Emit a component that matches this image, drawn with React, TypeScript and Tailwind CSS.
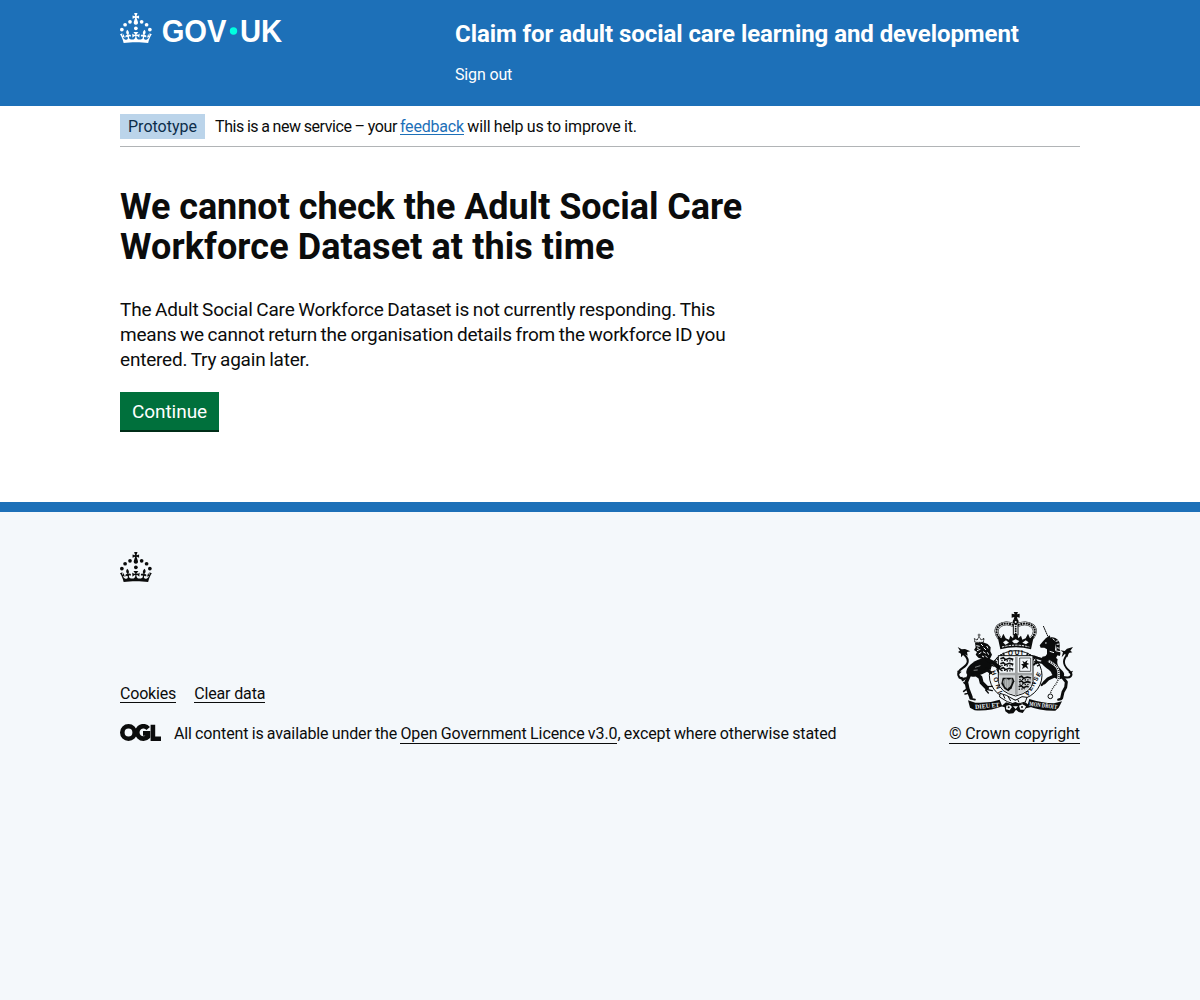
import type { ReactNode } from "react";

function Crown() {
  return (
    <svg viewBox="0 0 64 60" className="block h-[30px] w-8 shrink-0" fill="currentColor" aria-hidden="true">
      <circle cx="20" cy="17.6" r="3.7" />
      <circle cx="10.2" cy="23.5" r="3.7" />
      <circle cx="3.7" cy="33.2" r="3.7" />
      <circle cx="31.7" cy="30.6" r="3.7" />
      <circle cx="43.3" cy="17.6" r="3.7" />
      <circle cx="53.2" cy="23.5" r="3.7" />
      <circle cx="59.7" cy="33.2" r="3.7" />
      <path d="M33.1,9.8c.2-.1.3-.3.5-.5l4.6,2.4v-6.8l-4.6,1.5c-.1-.2-.3-.3-.5-.5l1.9-5.9h-6.7l1.9,5.9c-.2.1-.3.3-.5.5l-4.6-1.5v6.8l4.6-2.4c.1.2.3.3.5.5l-2.6,8c-.9,2.8,1.2,5.7,4.1,5.7h0c3,0,5.1-2.9,4.1-5.7l-2.6-8ZM37,37.9s-3.4,3.8-4.1,6.1c2.2,0,4.2-.5,6.4-2.8l-.7,8.5c-2-2.8-4.4-4.1-5.7-3.8.1,3.1.5,6.7,5.8,7.2,3.7.3,6.7-1.5,7-3.8.4-2.6-2-4.3-3.7-1.6-1.4-4.5,2.4-6.1,4.9-3.2-1.9-4.5-1.8-7.7,2.4-10.9,3,4,2.6,7.3-1.2,11.1,2.4-1.3,6.2,0,4,4.6-1.2-2.8-3.7-2.2-4.2.2-.3,1.7.7,3.7,3,4.2,1.9.3,4.7-.9,7-5.9-1.3,0-2.4.7-3.9,1.7l2.4-8c.6,2.3,1.4,3.7,2.2,4.5.6-1.6.5-2.8,0-5.3l5,1.8c-2.6,3.6-5.2,8.7-7.3,17.5-7.4-1.1-15.7-1.7-24.5-1.7h0c-8.8,0-17.1.6-24.5,1.7-2.1-8.9-4.7-13.9-7.3-17.5l5-1.8c-.5,2.5-.6,3.7,0,5.3.8-.8,1.6-2.3,2.2-4.5l2.4,8c-1.5-1-2.6-1.7-3.9-1.7,2.3,5,5.2,6.2,7,5.9,2.3-.4,3.3-2.4,3-4.2-.5-2.4-3-3.1-4.2-.2-2.2-4.6,1.6-6,4-4.6-3.7-3.7-4.2-7.1-1.2-11.1,4.2,3.2,4.3,6.4,2.4,10.9,2.5-2.8,6.3-1.3,4.9,3.2-1.8-2.7-4.1-1-3.7,1.6.3,2.3,3.3,4.1,7,3.8,5.4-.5,5.7-4.2,5.8-7.2-1.3-.2-3.7,1-5.7,3.8l-.7-8.5c2.2,2.3,4.2,2.7,6.4,2.8-.7-2.3-4.1-6.1-4.1-6.1h10.6,0Z" />
    </svg>
  );
}

function GovUkLogo() {
  return (
    <div className="flex h-[30px] text-white" aria-label="GOV.UK">
      <Crown />
      <svg viewBox="0 0 132 36" className="block h-9 w-[132px] overflow-visible" fill="currentColor">
        <g fontFamily="Liberation Sans" fontWeight="700" fontSize="30.5">
          <text x="9.7" y="28.7" textLength="64.8" lengthAdjust="spacingAndGlyphs">GOV</text>
          <text x="88" y="28.7" textLength="42.2" lengthAdjust="spacingAndGlyphs">UK</text>
        </g>
        <circle cx="81.5" cy="18" r="3.7" fill="#00ffe0" />
      </svg>
    </div>
  );
}

function OglLogo() {
  return (
    <svg viewBox="0 0 41 17" className="mt-[5px] block h-[17px] w-[41px] shrink-0" fill="none" stroke="#0b0c0c" strokeWidth="4.6">
      <circle cx="8.5" cy="8.5" r="6.2" />
      <path d="M28.2 4.4A6.2 6.2 0 1 0 28 12.6V9.4H23" />
      <path d="M32.9 0.8V14.7H41" />
    </svg>
  );
}

function Lion() {
  return (
    <g transform="translate(45 30)">
      {/* crown */}
      <path d="M60 97L58 86 66 90 72 80 79 90 87 85 85 97Z" fill="none" stroke="#0b0c0c" strokeWidth="3" strokeDasharray="4 1" />
      <path d="M72 71V80M68 75H77" stroke="#0b0c0c" strokeWidth="2" />
      {/* mane and head */}
      <path d="M60 99L84 97 98 102 107 112 106 124 111 134 105 146 97 152 84 148 70 143 62 134 66 126 57 120 62 112Z" />
      <path d="M64 107L74 109M78 102L84 108M66 122L76 118M86 113L93 120M71 132L79 127M95 108L99 115M84 125L92 130M81 138L87 141M97 127L101 134M66 114L71 115M91 137L97 143" stroke="#f4f8fb" strokeWidth="3" />
      {/* body */}
      <path d="M84 145C62 150 38 164 34 184C32 196 44 202 58 200C74 196 92 190 106 178L112 158 100 146Z" />
      <g fill="none" stroke="#0b0c0c" strokeLinecap="round" strokeLinejoin="round">
        <path d="M98 150L118 160 130 172" strokeWidth="12" />
        <path d="M126 165L137 169M130 174L139 181M126 178L131 187" strokeWidth="4" />
        <path d="M94 178L108 188" strokeWidth="9" />
        <path d="M44 192L34 216 38 236 48 262" strokeWidth="11" />
        <path d="M46 266L60 269M36 226L27 218M34 238L26 244" strokeWidth="5" />
        <path d="M60 190L76 202 80 218 96 234" strokeWidth="12" />
        <path d="M94 230L112 229M94 238L112 242M92 240L100 249" strokeWidth="4" />
        <path d="M28 208L22 212M30 252L40 250" strokeWidth="4" />
        <path d="M32 205C12 210 6 194 12 184C18 174 36 170 38 156C40 142 30 136 20 128" strokeWidth="6" />
      </g>
      <path d="M8 111L20 118 30 117 46 124 36 126 38 137 27 132 18 142 18 131 9 126 15 122ZM6 182L20 185 12 193ZM8 203L22 200 26 212Z" />
      <path d="M60 172L76 167M56 181L68 180" stroke="#f4f8fb" strokeWidth="1.5" />
    </g>
  );
}

function Unicorn() {
  return (
    <g transform="translate(45 30)">
      <path d="M265 48L279 80" stroke="#0b0c0c" strokeWidth="3" strokeDasharray="6 1" />
      {/* head and neck */}
      <path d="M273 84L279 80 284 76 287 84 297 92 302 104 300 120 309 132 302 146 284 152 266 146 276 132 276 118 268 113 257 113 254 106 264 94Z" />
      {/* mane */}
      <path d="M287 82C304 80 318 94 314 110C312 122 320 128 314 138L302 134C308 120 306 100 287 90Z" />
      <path d="M293 86L299 91M302 94L311 92M305 103L314 102M306 113L313 115M306 123L315 125M270 99L275 99M284 124L297 128" stroke="#f4f8fb" strokeWidth="3" />
      {/* body */}
      <path d="M262 140C276 136 300 138 308 148C304 162 310 172 322 182C332 192 328 204 314 208C300 208 292 198 288 186C280 176 262 168 258 156Z" />
      <g fill="none" stroke="#0b0c0c" strokeLinecap="round" strokeLinejoin="round">
        <path d="M268 150L248 144 237 140" strokeWidth="8" />
        <path d="M262 158L244 156 237 164" strokeWidth="6" />
        <path d="M298 198L280 206 268 218" strokeWidth="10" />
        <path d="M266 219L260 225" strokeWidth="7" />
        <path d="M318 196L334 216 332 232 324 246 320 264" strokeWidth="9" />
        <path d="M318 267L310 269" strokeWidth="7" />
        <path d="M322 200C350 208 354 194 344 184C332 174 322 158 330 144L338 130" strokeWidth="6" />
      </g>
      <path d="M354 111L346 122 352 127 341 129 337 142 330 131 320 142 324 127 316 121 329 123 336 116ZM354 182L340 187 348 194Z" />
      {/* chain */}
      <path d="M280 152C292 160 304 164 308 176S314 196 308 212 290 232 286 252" fill="none" stroke="#f4f8fb" strokeWidth="7" />
      <path d="M280 152C292 160 304 164 308 176S314 196 308 212 290 232 286 252" fill="none" stroke="#0b0c0c" strokeWidth="4" strokeDasharray="3 3" />
      <circle cx="286" cy="259" r="7" fill="#f4f8fb" stroke="#0b0c0c" strokeWidth="3" />
    </g>
  );
}

function CoatOfArms() {
  return (
    <svg viewBox="51 36 348 306" className="block h-[102px] w-[116px]" fill="#0b0c0c" aria-hidden="true">
      <path d="M221 36H234L231 43 239 41V53L231 51 233 59H221L223 51 215 53V41L224 43Z" />
      <circle cx="227" cy="66" r="9" />
      <circle cx="227" cy="66" r="3" fill="#f4f8fb" />
      <g fill="none" stroke="#0b0c0c">
        <path d="M178 114C152 82 190 60 222 76M276 114C302 82 264 60 232 76" strokeWidth="12" />
        <path d="M178 114C152 82 190 60 222 76M276 114C302 82 264 60 232 76" stroke="#f4f8fb" strokeWidth="9" />
        <path d="M178 114C152 82 190 60 222 76M276 114C302 82 264 60 232 76" strokeWidth="6" strokeDasharray="6 2" />
        <path d="M220 73V106M234 73V106" strokeWidth="3" />
        <path d="M227 77V105" strokeWidth="5" strokeDasharray="5 2" />
      </g>
      <path d="M172 106L184 115 190 101 197 115 207 119 211 107 219 115 222 102H232L235 115 243 107 247 119 257 115 264 101 270 115 282 106 273 148Q227 135 181 148Z" />
      <path d="M189 127L198 121 207 128 196 134ZM216 123L227 118 238 123 231 130H222ZM247 128L257 121 266 127 258 133Z" fill="#f4f8fb" />
      <path d="M186 141Q227 130 268 141" stroke="#f4f8fb" strokeWidth="3" strokeDasharray="7 3" fill="none" />

      {/* garter */}
      <ellipse cx="227" cy="226" rx="79" ry="74" fill="#f4f8fb" stroke="#0b0c0c" strokeWidth="3" />
      <g fontFamily="Liberation Sans" fontWeight="700" fontSize="19">
        <text x="204" y="166" textLength="44">QUI</text>
        <text transform="translate(153 214) rotate(72)" textLength="70">HONI</text>
        <text transform="translate(266 288) rotate(-60)" textLength="78">PENSE</text>
      </g>
      <path d="M193 162Q167 175 157 203M260 162Q287 175 297 200" fill="none" stroke="#0b0c0c" strokeWidth="10" strokeDasharray="4 4" />
      {/* shield */}
      <path d="M175 167H279V244Q276 277 227 288Q178 277 175 244Z" fill="#f4f8fb" stroke="#0b0c0c" strokeWidth="3" />
      <path d="M178 220H276V248Q270 273 227 286Q184 273 178 248Z" fill="#cfd2d4" />
      <path d="M229 170V285M178 222H276" stroke="#a0a3a4" strokeWidth="8" />
      <g fill="none" stroke="#0b0c0c" strokeWidth="5">
        <path d="M181 176L190 173 196 179 208 175 220 178M181 191L190 188 196 194 208 190 220 193M181 206L190 203 196 209 208 205 220 208" />
        <path d="M184 182L194 181 204 183 218 182M184 197L194 196 204 198 218 197M184 212L194 211 204 213 218 212" strokeWidth="4" strokeDasharray="4 4" />
        <path d="M237 232L245 229 251 235 262 231 273 234M237 246L245 243 251 249 262 245 272 248M236 260L244 257 250 263 260 259 266 261" />
        <path d="M238 239L248 238 258 240 271 239M238 253L248 252 258 254 269 253M236 268L254 266" strokeWidth="4" strokeDasharray="4 4" />
      </g>
      <rect x="239" y="174" width="33" height="40" fill="#f4f8fb" stroke="#0b0c0c" strokeWidth="3" strokeDasharray="2 1" />
      <path d="M247 182L254 187 263 180 260 188 268 192 260 195 265 207 256 201 246 208 249 198 243 193 251 191Z" />
      <path d="M188 233H219L223 244 215 265 205 274 193 266 184 251Z" />
      <path d="M192 238L199 235 206 239 215 235 218 243 211 259 202 267 194 259 188 246Z" fill="#8c9090" />
      <path d="M197 239V262M202 239V265M207 241V261M212 239V256" stroke="#e8eced" strokeWidth="1.5" />

      <Lion />
      <Unicorn />

      {/* buckle and roses */}
      <path d="M180 280L199 286 226 301 246 290 261 292 256 306 228 314 202 305 179 291Z" fill="#f4f8fb" stroke="#0b0c0c" strokeWidth="3" />
      <path d="M204 289L212 303M190 285L195 296M233 298L237 307" stroke="#0b0c0c" strokeWidth="3" />
      <path d="M184 319L198 307 212 311 226 306 241 312 256 307 274 321 258 325 248 339 236 336 228 329 220 340 206 341 196 334 194 322Z" />
      <path d="M199 317L210 315 216 321 209 331 198 328ZM237 317L247 313 258 319 253 329 241 329ZM219 319H234L227 327Z" fill="#f4f8fb" />
      <circle cx="206" cy="322" r="3" />
      <circle cx="246" cy="321" r="3" />
      {/* motto ribbon */}
      <path d="M84 301L106 308Q145 311 179 299L187 319Q150 334 104 331L90 323ZM366 304L342 310Q304 309 268 297L262 317Q300 333 346 332L356 323Z" />
      <g fill="#f4f8fb" fontFamily="Liberation Serif" fontWeight="700" fontSize="19">
        <text transform="translate(106 327) rotate(-5)" textLength="73" lengthAdjust="spacingAndGlyphs">DIEU ET</text>
        <text transform="translate(267 317) rotate(7)" textLength="84" lengthAdjust="spacingAndGlyphs">MON DROIT</text>
      </g>
    </svg>
  );
}

const footLink = "border-b border-[#0b0c0c]";

function Container({ children }: { children: ReactNode }) {
  return <div className="mx-auto w-[960px]">{children}</div>;
}

export default function App() {
  return (
    <div className="flex min-h-screen flex-col bg-white font-[Roboto,sans-serif] text-[#0b0c0c]">
      <header className="h-[106px] bg-[#1d70b8] text-white">
        <Container>
          <div className="flex">
            <div className="w-[335px] pt-[13px]">
              <GovUkLogo />
            </div>
            <div className="pt-[19px]">
              <div className="text-2xl leading-[30px] font-bold tracking-[-0.07px] whitespace-nowrap">
                Claim for adult social care learning and development
              </div>
              <div className="mt-4 text-base leading-5 tracking-[-0.15px]">Sign out</div>
            </div>
          </div>
        </Container>
      </header>

      <main className="h-[396px]">
        <Container>
          <div className="flex h-[41px] items-start border-b border-[#b1b4b6] pt-2 text-base">
            <strong className="h-[25px] w-[85px] bg-[#bbd4ea] text-center leading-[25px] font-normal text-[#0c2d4a]">
              Prototype
            </strong>
            <p className="ml-[10px] leading-[25px] whitespace-pre">
              <span className="tracking-[-0.42px] [word-spacing:-0.5px]">{"This is a new service – your "}</span>
              <a className="inline-block h-[21px] border-b border-[#1d70b8] leading-[25px] tracking-[-0.2px] text-[#1d70b8]">feedback</a>
              <span className="tracking-[-0.15px] [word-spacing:-0.4px]">{" will help us to improve it."}</span>
            </p>
          </div>

          <h1 className="mt-10 text-4xl leading-10 font-bold whitespace-nowrap">
            <span className="block tracking-[-0.05px]">We cannot check the Adult Social Care</span>
            <span className="block tracking-[0.08px]">Workforce Dataset at this time</span>
          </h1>
          <p className="mt-[30px] text-[19px] leading-[25px] tracking-[-0.2px] whitespace-nowrap [word-spacing:-0.8px]">
            <span className="block">The Adult Social Care Workforce Dataset is not currently responding. This</span>
            <span className="block tracking-[-0.22px]">means we cannot return the organisation details from the workforce ID you</span>
            <span className="block">entered. Try again later.</span>
          </p>
          <button className="mt-5 block h-10 w-[99px] border-b-2 border-[#002d18] bg-[#00703c] pt-px text-[19px] leading-[37px] tracking-[-0.05px] text-white">
            Continue
          </button>
        </Container>
      </main>

      <footer className="flex-1 border-t-10 border-[#1d70b8] bg-[#f4f8fb] pt-10 text-base leading-5">
        <Container>
          <Crown />
          <div className="mt-[30px] flex items-end justify-between">
            <div>
              <div className="flex gap-[18px]">
                <a className={`${footLink} h-5 leading-[22px] tracking-[-0.18px]`}>Cookies</a>
                <a className={`${footLink} h-5 leading-[22px] tracking-[-0.14px]`}>Clear data</a>
              </div>
              <div className="mt-4 flex h-[25px]">
                <OglLogo />
                <p className="ml-[13px] pt-[5px] tracking-[-0.12px] whitespace-pre [word-spacing:-0.6px]">
                  {"All content is available under the "}
                  <a className={`${footLink} inline-block h-5 tracking-[-0.08px]`}>Open Government Licence v3.0</a>
                  <span className="tracking-[-0.09px]">{", except where otherwise stated"}</span>
                </p>
              </div>
            </div>
            <div className="flex flex-col items-end">
              <div className="pr-[7px]">
                <CoatOfArms />
              </div>
              <a className={`${footLink} mt-[10px] h-5 tracking-[-0.08px]`}>© Crown copyright</a>
            </div>
          </div>
        </Container>
      </footer>
    </div>
  );
}
